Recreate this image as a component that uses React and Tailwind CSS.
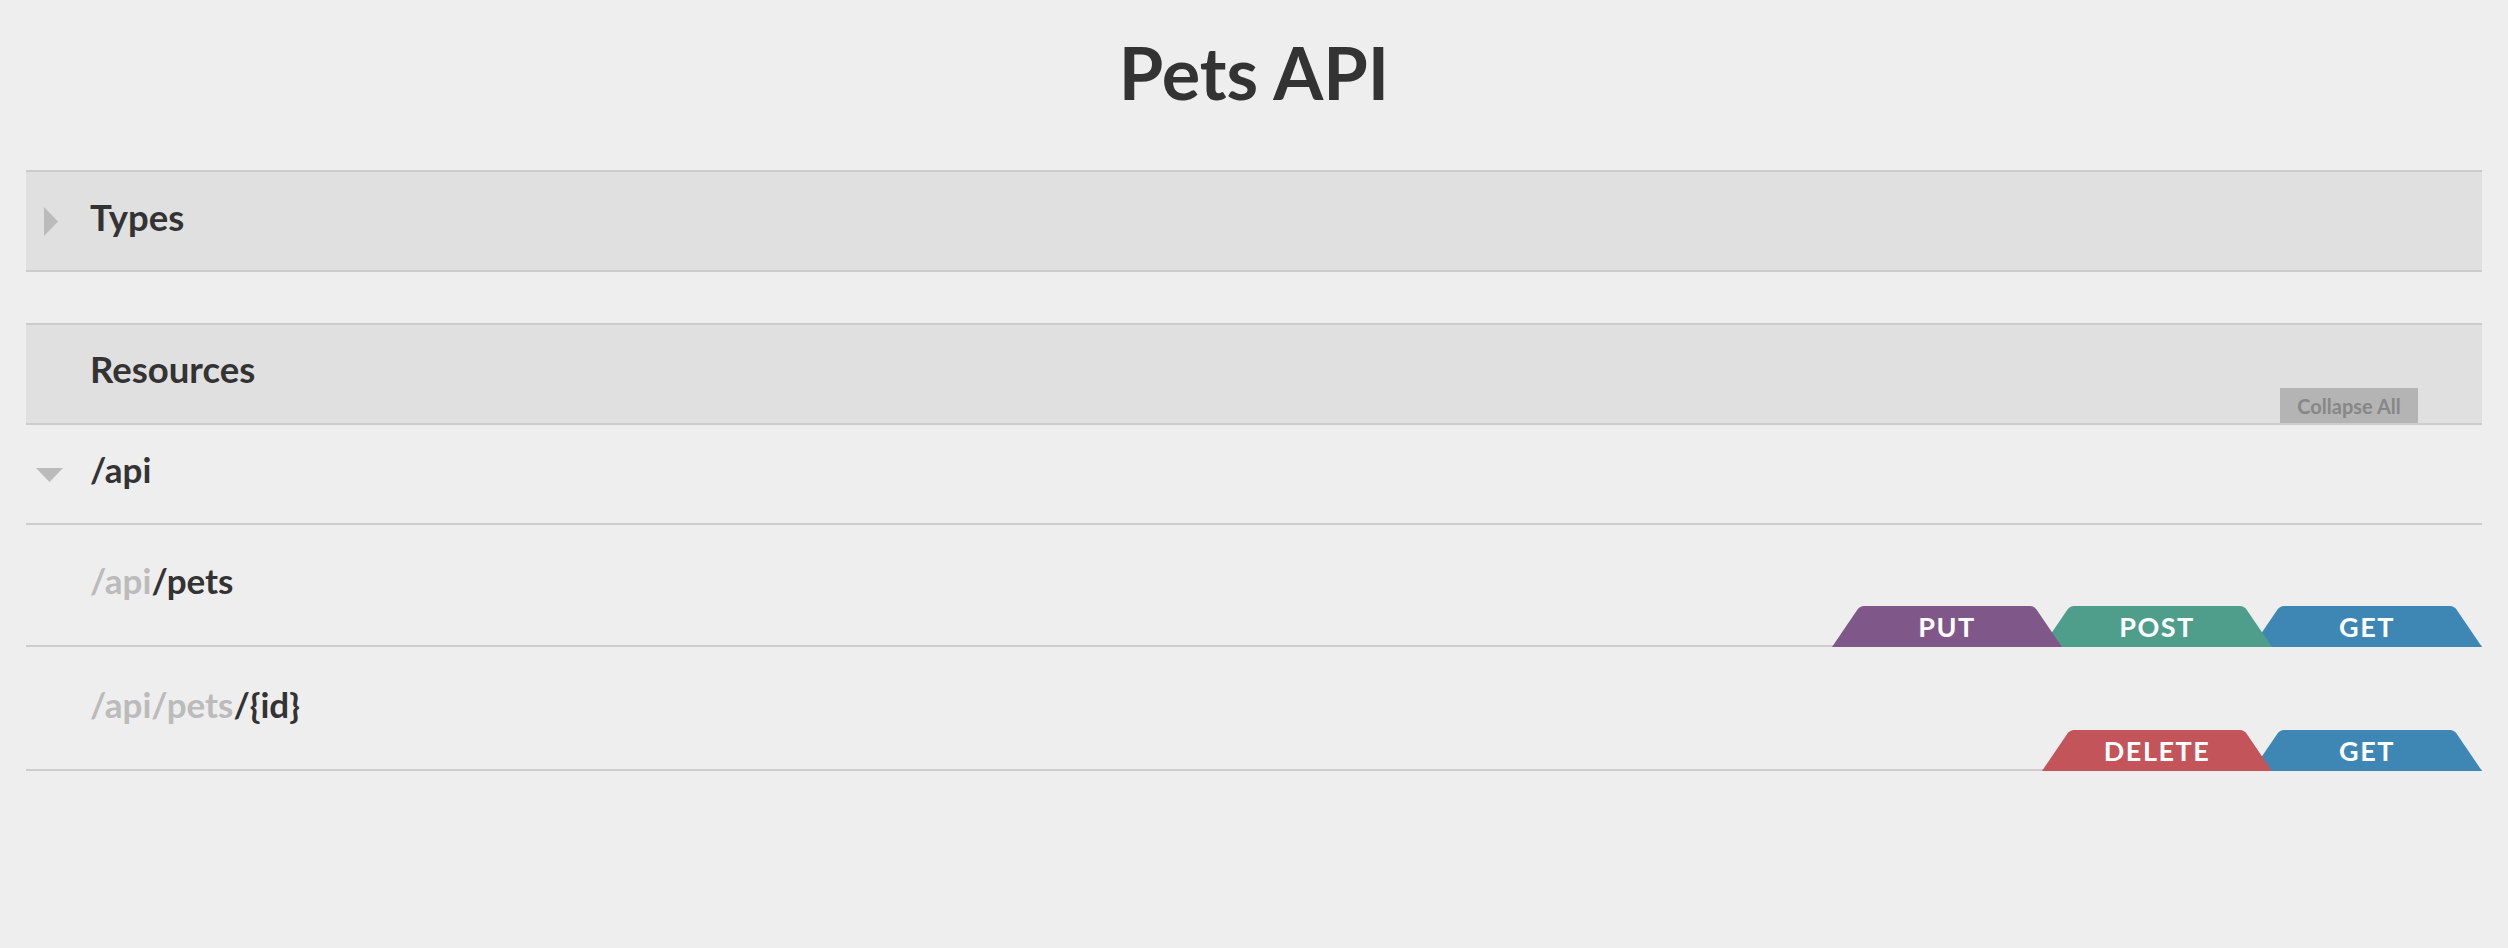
import React from "react";

function Tab({ label, color, className }) {
  return (
    <div className={"relative flex h-[41px] w-[230px] items-center justify-center " + className}>
      <svg className="absolute inset-0" width="230" height="41" viewBox="0 0 230 41">
        <path d="M0 41 L25.5 3.5 Q28 0 32 0 L198 0 Q202 0 204.5 3.5 L230 41 Z" fill={color} />
      </svg>
      <span className="relative text-[27px] font-bold leading-none tracking-[1.5px] text-white">{label}</span>
    </div>
  );
}

function RightTriangle() {
  return (
    <svg width="14" height="29" viewBox="0 0 14 29">
      <polygon points="0,0 14,14.5 0,29" fill="#bbbbbb" />
    </svg>
  );
}

function DownTriangle() {
  return (
    <svg width="27" height="14" viewBox="0 0 27 14">
      <polygon points="0,0 27,0 13.5,14" fill="#bbbbbb" />
    </svg>
  );
}

export default function App() {
  return (
    <div className="min-h-screen w-full bg-[#eeeeee] pb-[60px] font-['Lato',sans-serif] text-[#333333]">
      <h1 className="pt-[29px] text-center text-[72px] font-bold leading-[1.2]">Pets API</h1>

      <div className="mx-[26px] mt-[55px]">
        {/* Types */}
        <div className="flex h-[102px] items-start border-y-2 border-[#cccccc] bg-[#e0e0e0]">
          <div className="ml-[18px] mt-[35px]">
            <RightTriangle />
          </div>
          <div className="ml-[32px] pt-[24px] text-[36.5px] font-bold leading-[43px]">Types</div>
        </div>

        {/* Resources */}
        <div className="mt-[51px] flex h-[102px] justify-between border-y-2 border-[#cccccc] bg-[#e0e0e0]">
          <div className="self-start pl-[64px] pt-[23px] text-[36.5px] font-bold leading-[43px]">Resources</div>
          <button className="mr-[64px] h-[35px] w-[138px] self-end bg-[#b4b4b4] text-[20px] font-bold text-[#878787]">
            Collapse All
          </button>
        </div>

        {/* /api */}
        <div className="flex h-[100px] items-start border-b-2 border-[#cccccc]">
          <div className="ml-[10px] mt-[43px]">
            <DownTriangle />
          </div>
          <div className="ml-[27px] pt-[23px] text-[35px] font-bold leading-[42px]">/api</div>
        </div>

        {/* /api/pets */}
        <div className="flex h-[122px] justify-between border-b-2 border-[#cccccc]">
          <div className="self-start pl-[64px] pt-[34px] text-[35px] font-bold leading-[42px]">
            <span className="text-[#bbbbbb]">/api</span>
            <span>/pets</span>
          </div>
          <div className="-mb-[2px] flex self-end">
            <Tab label="PUT" color="#7f5789" className="z-30" />
            <Tab label="POST" color="#4f9e8c" className="-ml-[20px] z-20" />
            <Tab label="GET" color="#3e87b4" className="-ml-[20px] z-10" />
          </div>
        </div>

        {/* /api/pets/{id} */}
        <div className="flex h-[124px] justify-between border-b-2 border-[#cccccc]">
          <div className="self-start pl-[64px] pt-[36px] text-[35px] font-bold leading-[42px]">
            <span className="text-[#bbbbbb]">/api/pets</span>
            <span>/{"{id}"}</span>
          </div>
          <div className="-mb-[2px] flex self-end">
            <Tab label="DELETE" color="#c2545a" className="z-20" />
            <Tab label="GET" color="#3e87b4" className="-ml-[20px] z-10" />
          </div>
        </div>
      </div>
    </div>
  );
}
